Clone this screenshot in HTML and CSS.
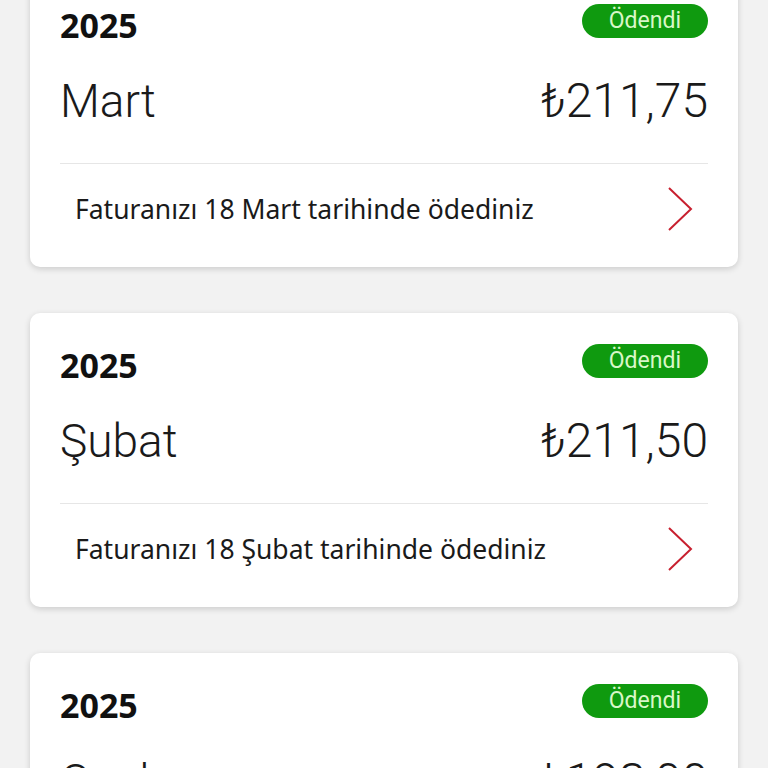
FILE: index.html
```html
<!DOCTYPE html>
<html lang="tr">
<head>
    <meta charset="UTF-8">
    <meta name="viewport" content="width=device-width, initial-scale=1.0">
    <title>Faturalarım</title>
    <link rel="stylesheet" href="styles.css">
</head>
<body>

<div class="bill-list">
    <!-- Mart -->
    <div class="card">
        <div class="card-head">
            <span class="year">2025</span>
            <span class="badge">Ödendi</span>
        </div>
        <div class="card-main">
            <span class="month">Mart</span>
            <span class="amount">₺211,75</span>
        </div>
        <div class="card-foot">
            <span class="foot-text">Faturanızı 18 Mart tarihinde ödediniz</span>
            <svg class="chevron" width="26" height="46" viewBox="0 0 26 46"><polyline points="2,2 24,23 2,44" fill="none" stroke="#c8202f" stroke-width="2"/></svg>
        </div>
    </div>

    <!-- Şubat -->
    <div class="card">
        <div class="card-head">
            <span class="year">2025</span>
            <span class="badge">Ödendi</span>
        </div>
        <div class="card-main">
            <span class="month">Şubat</span>
            <span class="amount">₺211,50</span>
        </div>
        <div class="card-foot">
            <span class="foot-text">Faturanızı 18 Şubat tarihinde ödediniz</span>
            <svg class="chevron" width="26" height="46" viewBox="0 0 26 46"><polyline points="2,2 24,23 2,44" fill="none" stroke="#c8202f" stroke-width="2"/></svg>
        </div>
    </div>

    <!-- Ocak -->
    <div class="card">
        <div class="card-head">
            <span class="year">2025</span>
            <span class="badge">Ödendi</span>
        </div>
        <div class="card-main">
            <span class="month">Ocak</span>
            <span class="amount">₺193,00</span>
        </div>
        <div class="card-foot">
            <span class="foot-text">Faturanızı 18 Ocak tarihinde ödediniz</span>
            <svg class="chevron" width="26" height="46" viewBox="0 0 26 46"><polyline points="2,2 24,23 2,44" fill="none" stroke="#c8202f" stroke-width="2"/></svg>
        </div>
    </div>
</div>

</body>
</html>
```

FILE: styles.css
```css
body {
    margin: 0;
    background-color: #f2f2f2;
    font-family: Roboto, "Noto Sans", sans-serif;
    color: #1a1a1a;
    overflow: hidden;
}
.bill-list {
    margin-top: -27px; /* liste kaydırılmış durumda */
    padding: 0 30px;
}
.card {
    background-color: #fff;
    border-radius: 10px;
    box-shadow: 0 2px 6px rgba(0,0,0,0.16);
    padding: 30px 30px 0;
    margin-bottom: 46px;
}
.card-head {
    display: flex;
    justify-content: space-between;
    align-items: center;
    height: 35px;
}
.year {
    font-family: "Noto Sans", Roboto, sans-serif;
    font-size: 34px;
    font-weight: 700;
    color: #111;
    margin-top: 8px;
}
.badge {
    background-color: #0f9a0f;
    color: #d9f7c8;
    font-size: 23px;
    line-height: 34px;
    padding: 0 27px;
    border-radius: 17px;
}
.card-main {
    display: flex;
    justify-content: space-between;
    align-items: center;
    height: 125px;
    border-bottom: 1px solid #e6e6e6;
}
.month {
    font-size: 46px;
    font-weight: 300;
    color: #1a1a1a;
}
.amount {
    font-size: 48px;
    font-weight: 300;
    color: #1a1a1a;
}
.card-foot {
    display: flex;
    justify-content: space-between;
    align-items: center;
    height: 89px;
    padding: 0 15px 14px;
}
.foot-text {
    font-family: "Noto Sans", Roboto, sans-serif;
    font-size: 26.5px;
    color: #1a1a1a;
}
.chevron {
    display: block;
}
```
